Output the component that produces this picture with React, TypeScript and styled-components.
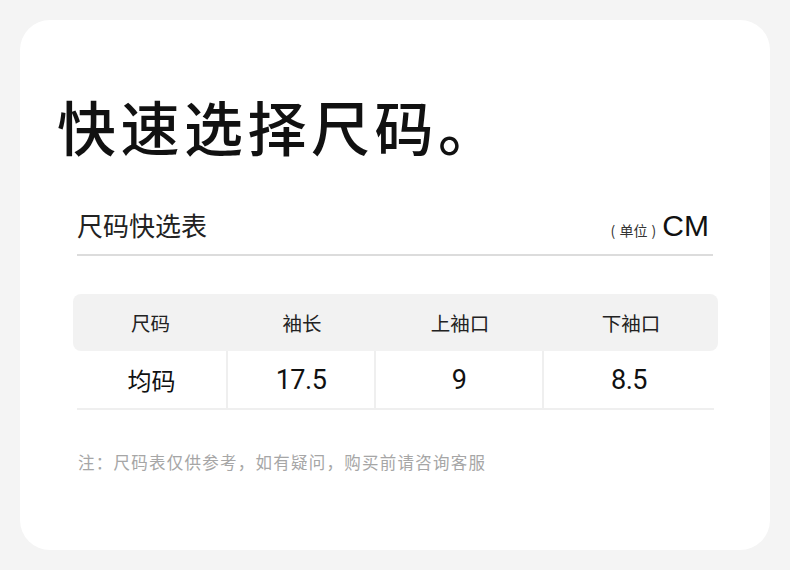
import * as React from 'react';
import styled, { createGlobalStyle } from 'styled-components';

const GlobalStyle = createGlobalStyle`
    html, body {
        margin: 0;
        padding: 0;
        background: #f4f4f4;
    }
    body {
        font-family: "Noto Sans CJK SC", "Noto Sans", sans-serif;
    }
`

const Page = styled.div`
    width: 790px;
    height: 570px;
    padding: 20px;
    box-sizing: border-box;
    background: #f4f4f4;
`

const Card = styled.div`
    background: #ffffff;
    border-radius: 30px;
    height: 530px;
    padding: 66px 57px 0 53px;
    box-sizing: border-box;
`

const Title = styled.h1`
    margin: 0 0 0 -16px;
    font-size: 59px;
    line-height: 80px;
    font-weight: 500;
    color: #111;
    letter-spacing: 4.5px;
`

const SubHeader = styled.div`
    display: flex;
    align-items: flex-end;
    justify-content: space-between;
    margin: 41px 0 0 4px;
    padding-bottom: 11px;
    border-bottom: 2px solid #dcdcdc;
`

const SubTitle = styled.div`
    font-size: 26px;
    line-height: 36px;
    color: #222;
`

const Unit = styled.div`
    display: flex;
    align-items: baseline;
    gap: 6px;
    padding-right: 4px;
`

const UnitLabel = styled.span`
    font-size: 14px;
    color: #333;
    word-spacing: 1px;
`

const UnitValue = styled.span`
    font-family: "Liberation Sans", Arial, sans-serif;
    font-size: 30px;
    line-height: 34px;
    color: #111;
`

const Table = styled.div`
    margin-top: 38px;
    display: grid;
    grid-template-columns: 155px 148px 168px 174px;
`

const HeadCell = styled.div<{ $first?: boolean; $last?: boolean }>`
    height: 57px;
    display: flex;
    align-items: center;
    justify-content: center;
    background: #f2f2f2;
    font-size: 19.5px;
    color: #222;
    border-radius: ${p => (p.$first ? '8px 0 0 8px' : p.$last ? '0 8px 8px 0' : '0')};
`

const BodyCell = styled.div<{ $first?: boolean; $last?: boolean }>`
    height: 57px;
    display: flex;
    align-items: center;
    justify-content: center;
    border-bottom: 2px solid #efefef;
    border-right: ${p => (p.$last ? 'none' : '2px solid #efefef')};
    margin-left: ${p => (p.$first ? '4px' : '0')};
    margin-right: ${p => (p.$last ? '4px' : '0')};
    font-size: 24px;
    color: #111;
`

const Num = styled.span`
    font-family: Roboto, "Liberation Sans", sans-serif;
    font-size: 27px;
    letter-spacing: -0.5px;
`

const Note = styled.div`
    margin: 40px 0 0 5px;
    font-size: 16.5px;
    color: #a6a6a6;
    letter-spacing: 1.25px;
`

const headers = ['尺码', '袖长', '上袖口', '下袖口'];
const row = ['均码', '17.5', '9', '8.5'];

export default function App() {
    return (
        <Page>
            <GlobalStyle />
            <Card>
                <Title>快速选择尺码。</Title>
                <SubHeader>
                    <SubTitle>尺码快选表</SubTitle>
                    <Unit>
                        <UnitLabel>( 单位 )</UnitLabel>
                        <UnitValue>CM</UnitValue>
                    </Unit>
                </SubHeader>
                <Table>
                    {headers.map((h, i) => (
                        <HeadCell key={h} $first={i === 0} $last={i === headers.length - 1}>{h}</HeadCell>
                    ))}
                    {row.map((v, i) => (
                        <BodyCell key={i} $first={i === 0} $last={i === row.length - 1}>
                            {i === 0 ? v : <Num>{v}</Num>}
                        </BodyCell>
                    ))}
                </Table>
                <Note>注：尺码表仅供参考，如有疑问，购买前请咨询客服</Note>
            </Card>
        </Page>
    );
}
